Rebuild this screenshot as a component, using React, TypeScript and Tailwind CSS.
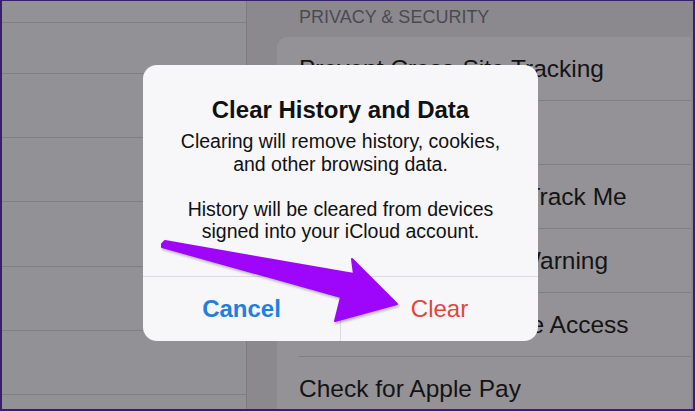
import React from "react";

const leftRows = [22, 51, 64, 64, 65, 64, 64, 64];

const cells = [
  "Prevent Cross-Site Tracking",
  "Block All Cookies",
  "Ask Websites Not to Track Me",
  "Fraudulent Website Warning",
  "Camera & Microphone Access",
  "Check for Apple Pay",
];

const App = () => {
  return (
    <div className="relative w-[695px] h-[411px] overflow-hidden border-2 border-t border-[#3a1d6e] bg-[#8b898e] font-['Liberation_Sans',Arial,sans-serif]">
      <div className="flex h-full">
        {/* left column, dimmed */}
        <div className="w-[245px] shrink-0 h-full border-r border-[#7c7b80] bg-[#929196]">
          {leftRows.map((h, i) => (
            <div
              key={i}
              className="border-b border-[#7f7e83]"
              style={{ height: h }}
            />
          ))}
        </div>

        {/* right column */}
        <div className="flex-1 h-full">
          <div className="h-[36px] pl-[52px] pt-[7px] text-[18px] leading-[18px] text-[#4b4a50] whitespace-nowrap">
            PRIVACY &amp; SECURITY
          </div>
          <div className="ml-[30px] mr-[2px] rounded-tl-[10px] bg-[#949297]">
            {cells.map((c) => (
              <div key={c} className="pl-[22px]">
                <div className="h-[64px] border-b border-[#807f84] text-[24.5px] leading-[64px] text-[#141414] whitespace-nowrap">
                  {c}
                </div>
              </div>
            ))}
          </div>
        </div>
      </div>

      {/* alert */}
      <div className="absolute left-[141px] top-[64px] w-[395px] rounded-[14px] bg-[#f7f6f9] text-[#111]">
        <div className="pt-[31px] pb-[33px] text-center whitespace-nowrap">
          <div className="text-[24px] leading-[28px] font-bold">
            Clear History and Data
          </div>
          <div className="mt-[6px] text-[19.5px] leading-[22.6px]">
            Clearing will remove history, cookies,
            <br />
            and other browsing data.
            <br />
            <br />
            History will be cleared from devices
            <br />
            signed into your iCloud account.
          </div>
        </div>
        <div className="flex h-[65px] border-t border-[#dbdadf]">
          <div className="flex-1 border-r border-[#dbdadf] text-center text-[24px] leading-[64px] font-bold text-[#1f7fe0]">
            Cancel
          </div>
          <div className="flex-1 text-center text-[24px] leading-[64px] text-[#e5453c]">
            Clear
          </div>
        </div>
      </div>

      {/* annotation arrow */}
      <svg
        className="absolute left-[-2px] top-[-1px] w-[695px] h-[411px] pointer-events-none drop-shadow-[1px_2px_1px_rgba(0,0,0,0.25)]"
        viewBox="0 0 695 411"
      >
        <polygon
          points="162,244 165,241 354,274 352,259 397,304 335,321 341,297 162,247"
          fill="#9e05fb"
          stroke="#9e05fb"
          strokeWidth="2"
          strokeLinejoin="round"
        />
      </svg>
    </div>
  );
};

export default App;
